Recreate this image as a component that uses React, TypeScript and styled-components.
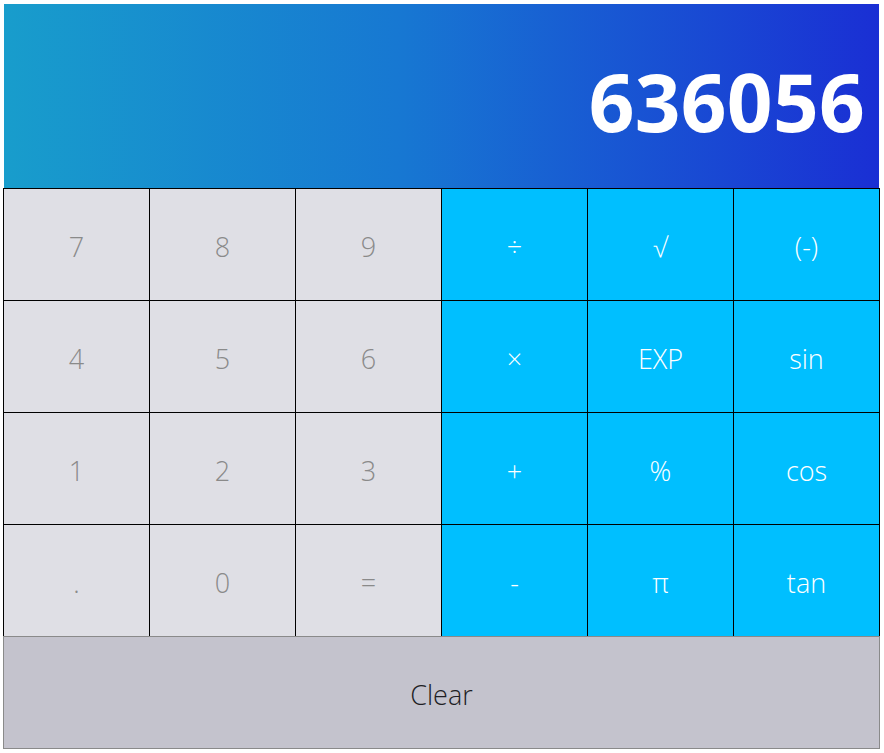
import styled, { createGlobalStyle } from 'styled-components';

const GlobalStyle = createGlobalStyle`
  html, body {
    margin: 0;
    padding: 0;
    background: #ffffff;
  }
`;

const KEYS: { label: string; kind: 'num' | 'op' }[] = [
  { label: '7', kind: 'num' },
  { label: '8', kind: 'num' },
  { label: '9', kind: 'num' },
  { label: '÷', kind: 'op' },
  { label: '√', kind: 'op' },
  { label: '(-)', kind: 'op' },
  { label: '4', kind: 'num' },
  { label: '5', kind: 'num' },
  { label: '6', kind: 'num' },
  { label: '×', kind: 'op' },
  { label: 'EXP', kind: 'op' },
  { label: 'sin', kind: 'op' },
  { label: '1', kind: 'num' },
  { label: '2', kind: 'num' },
  { label: '3', kind: 'num' },
  { label: '+', kind: 'op' },
  { label: '%', kind: 'op' },
  { label: 'cos', kind: 'op' },
  { label: '.', kind: 'num' },
  { label: '0', kind: 'num' },
  { label: '=', kind: 'num' },
  { label: '-', kind: 'op' },
  { label: 'π', kind: 'op' },
  { label: 'tan', kind: 'op' },
];

function App() {
  return (
    <>
      <GlobalStyle />
      <Calculator>
        <Display>
          <Readout>636056</Readout>
        </Display>
        <Keypad>
          {KEYS.map((k) => (
            <Key key={k.label} $kind={k.kind}>
              {k.label}
            </Key>
          ))}
        </Keypad>
        <ClearButton>Clear</ClearButton>
      </Calculator>
    </>
  );
}

export default App;

const Calculator = styled.div`
  width: 877px;
  padding: 4px 0 0 3px;
  display: flex;
  flex-direction: column;
  font-family: 'Open Sans', 'Noto Sans', sans-serif;
`;

const Display = styled.div`
  margin-left: 1px;
  width: 875px;
  height: 184px;
  box-sizing: border-box;
  padding: 10px 14px 0 0;
  display: flex;
  align-items: center;
  justify-content: flex-end;
  background: linear-gradient(to right, #189dcc 0%, #1778d2 45%, #1a2fd4 100%);
`;

const Readout = styled.div`
  color: #ffffff;
  font-size: 80px;
  font-weight: 700;
  letter-spacing: 0.3px;
  line-height: 1;
`;

const Keypad = styled.div`
  display: grid;
  grid-template-columns: repeat(6, 145px);
  grid-auto-rows: 111px;
  gap: 1px;
  padding: 1px 1px 0 1px;
  background: #000000;
`;

const Key = styled.button<{ $kind: 'num' | 'op' }>`
  border: none;
  margin: 0;
  padding: 4px 0 0;
  font-family: inherit;
  font-size: 27px;
  font-weight: 300;
  display: flex;
  align-items: center;
  justify-content: center;
  background: ${({ $kind }) => ($kind === 'num' ? '#dfdfe5' : '#00bfff')};
  color: ${({ $kind }) => ($kind === 'num' ? '#8a8a8a' : '#ffffff')};
  cursor: pointer;
`;

const ClearButton = styled.button`
  width: 877px;
  height: 113px;
  margin: 0;
  padding: 4px 0 0;
  border: 1px solid #8a8a8a;
  background: #c4c3cd;
  color: #1e1e24;
  font-family: inherit;
  font-size: 27px;
  font-weight: 300;
  cursor: pointer;
`;
